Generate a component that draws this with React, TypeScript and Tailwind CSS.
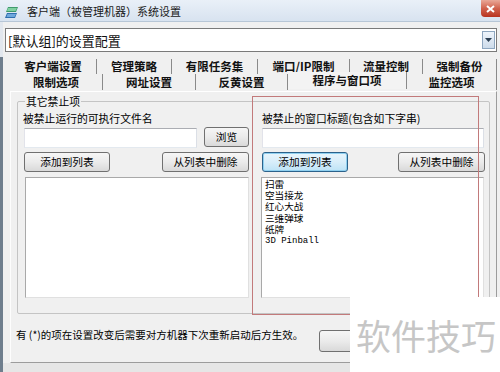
import React from "react";

const btn =
  "h-[20px] flex items-center justify-center rounded-[3px] border border-[#707070] bg-gradient-to-b from-[#f6f6f6] via-[#ebebeb] to-[#d9d9d9] text-[10.7px] leading-none text-black";
const btnFocus =
  "h-[20px] flex items-center justify-center rounded-[3px] border border-[#2c628b] bg-gradient-to-b from-[#e8f5fc] via-[#d8eefa] to-[#bde3f6] text-[10.7px] leading-none text-black shadow-[inset_0_0_0_1px_#8fd0f0]";

function Row1() {
  const tabs = [
    { t: "客户端设置", w: "w-[87px]" },
    { t: "管理策略", w: "w-[75px]" },
    { t: "有限任务集", w: "w-[86px]" },
    { t: "端口/IP限制", w: "w-[92px]" },
    { t: "流量控制", w: "w-[73px]" },
    { t: "强制备份", w: "w-[74px]" },
  ];
  return (
    <div className="mt-[7px] ml-[7px] flex h-[15px]">
      {tabs.map((x) => (
        <div
          key={x.t}
          className={`${x.w} h-[15px] flex items-center justify-center border-r border-[#8a8a8a] text-[11.5px] font-bold leading-none text-[#111]`}
        >
          {x.t}
        </div>
      ))}
    </div>
  );
}

function Row2() {
  const tabs = [
    { t: "限制选项", w: "w-[93px]", sel: false },
    { t: "网址设置", w: "w-[93px]", sel: false },
    { t: "反黄设置", w: "w-[92px]", sel: false },
    { t: "程序与窗口项", w: "w-[119px]", sel: true },
    { t: "监控选项", w: "w-[90px]", sel: false },
  ];
  return (
    <div className="ml-[7px] flex h-[16px]">
      {tabs.map((x) =>
        x.sel ? (
          <div
            key={x.t}
            className={`${x.w} h-[17px] -mt-[2px] flex items-center justify-center border-r border-[#8a8a8a] bg-[#f3f3f3] text-[11.5px] font-bold leading-none text-[#111]`}
          >
            {x.t}
          </div>
        ) : (
          <div
            key={x.t}
            className={`${x.w} h-[16px] flex items-center justify-center border-r border-[#8a8a8a] text-[11.5px] font-bold leading-none text-[#111] pt-[2px]`}
          >
            {x.t}
          </div>
        )
      )}
    </div>
  );
}

export default function App() {
  const items = ["扫雷", "空当接龙", "红心大战", "三维弹球", "纸牌"];
  return (
    <div className="relative w-[500px] h-[372px] overflow-hidden bg-[#f0f0f0] font-['Noto_Sans_CJK_SC','Noto_Sans',sans-serif] text-black">
      {/* title bar */}
      <div className="h-[22px] flex items-center bg-gradient-to-b from-[#e9f0f8] to-[#d8e3f0] border-b border-[#b7c6d6]">
        <svg className="ml-[5px] mt-[3px]" width="14" height="13" viewBox="0 0 14 13">
          <path d="M3 1 L13 1 L11 6 L1 6 Z" fill="#3f9a6c" />
          <path d="M3 2 L12 2 L10.5 5 L2 5 Z" fill="#7fd0a0" />
          <path d="M2 7 L12 7 L10 12 L0 12 Z" fill="#2f6fae" />
          <path d="M2.5 8 L11 8 L9.5 11 L1.5 11 Z" fill="#6fa8dc" />
        </svg>
        <span className="ml-[8px] mt-[2px] text-[11px] leading-none text-[#1a1a1a]">
          客户端（被管理机器）系统设置
        </span>
        <div className="ml-auto self-start w-[19px] h-[17px] rounded-bl-[4px] bg-gradient-to-b from-[#e9a898] via-[#d0614c] to-[#b8321e] flex items-center justify-center">
          <svg width="9" height="8" viewBox="0 0 9 8">
            <path d="M1 1 L8 7 M8 1 L1 7" stroke="#fff" strokeWidth="2" />
          </svg>
        </div>
      </div>

      <div className="flex h-[350px]">
        {/* left frame strip */}
        <div className="w-[3px] flex flex-col">
          <div className="h-[35px] bg-[#e2e7ee]" />
          <div className="flex-1 bg-[#6f7e8d]" />
        </div>

        <div className="flex-1 flex flex-col">
          {/* combobox */}
          <div className="mt-[6px] ml-[2px] w-[492px] h-[24px] border border-[#7a7a7a] bg-white flex items-center">
            <span className="ml-[2px] text-[13px] leading-none text-[#111]">[默认组]的设置配置</span>
            <div className="ml-auto mr-[1px] w-[13px] h-[18px] border border-[#8ea6bf] bg-gradient-to-b from-[#eef4fb] to-[#cddbea] flex items-center justify-center">
              <svg width="7" height="4" viewBox="0 0 7 4">
                <path d="M0 0 L7 0 L3.5 4 Z" fill="#2b3e52" />
              </svg>
            </div>
          </div>

          <Row1 />
          <Row2 />

          {/* tab panel */}
          <div className="mt-[1px] ml-[7px] w-[487px] h-[272px] border-t border-l border-t-[#ffffff] border-l-[#fdfdfd] border-r border-b border-r-[#9c9c9c] border-b-[#9c9c9c] bg-[#f0f0f0] flex flex-col">
            {/* group box */}
            <div className="relative mt-[9px] ml-[6px] w-[473px] h-[213px] border border-[#c4c4c4] rounded-[2px] pl-[6px]">
              <span className="absolute top-[-7px] left-[7px] bg-[#f0f0f0] px-[1px] text-[10.8px] leading-[12px]">
                其它禁止项
              </span>
              <div className="flex gap-[12px]">
                {/* left column */}
                <div className="w-[225px] flex flex-col">
                  <div className="mt-[10px] -ml-[1px] h-[12px] text-[10.8px] leading-[12px]">
                    被禁止运行的可执行文件名
                  </div>
                  <div className="mt-[4px] flex">
                    <div className="w-[173px] h-[20px] bg-white border border-[#abadb3] border-l-[#e2e3ea] border-r-[#dbdfe6] border-b-[#e3e9ef]" />
                    <div className={`${btn} ml-auto w-[45px] -mt-[1px]`}>浏览</div>
                  </div>
                  <div className="mt-[4px] flex">
                    <div className={`${btn} w-[86px]`}>添加到列表</div>
                    <div className={`${btn} ml-auto w-[87px]`}>从列表中删除</div>
                  </div>
                  <div className="mt-[5px] ml-[1px] w-[224px] h-[121px] bg-white border border-[#a9a9a9] border-r-[#e0e0e0] border-b-[#e0e0e0]" />
                </div>
                {/* right column */}
                <div className="w-[224px] flex flex-col">
                  <div className="mt-[10px] ml-[1px] h-[12px] text-[10.8px] leading-[12px]">
                    被禁止的窗口标题(包含如下字串)
                  </div>
                  <div className="mt-[4px] ml-[1px] w-[222px] h-[20px] bg-white border border-[#abadb3] border-l-[#e2e3ea] border-r-[#dbdfe6] border-b-[#e3e9ef]" />
                  <div className="mt-[4px] flex">
                    <div className={`${btnFocus} ml-[1px] w-[86px]`}>添加到列表</div>
                    <div className={`${btn} ml-auto w-[87px]`}>从列表中删除</div>
                  </div>
                  <div className="mt-[5px] w-[223px] h-[121px] bg-white border border-[#a9a9a9] border-r-[#e0e0e0] border-b-[#e0e0e0] pl-[3px] pt-[1px] flex flex-col">
                    {items.map((s) => (
                      <div key={s} className="h-[11.2px] text-[9.6px] leading-[11.2px] text-black">
                        {s}
                      </div>
                    ))}
                    <div className="h-[11.2px] mt-[1px] font-['Liberation_Mono',monospace] text-[9px] leading-[11.2px] text-black">
                      3D Pinball
                    </div>
                  </div>
                </div>
              </div>
            </div>

            {/* bottom note */}
            <div className="mt-[15px] pl-[5px] flex items-start">
              <div className="w-[303px] text-[10.5px] leading-[12px] text-black whitespace-nowrap">
                有 (*)的项在设置改变后需要对方机器下次重新启动后方生效。
              </div>
              <div className={`${btn} mt-[1px] w-[75px] h-[22px]`} />
            </div>
          </div>
          <div className="flex-1 bg-[#e6e6e6]" />
        </div>
      </div>

      {/* red annotation rectangle */}
      <div className="absolute left-[252px] top-[96px] w-[227px] h-[219px] border border-[#c27a7b] pointer-events-none" />

      {/* watermark */}
      <div className="absolute left-[350px] top-[297px] w-[150px] h-[75px] bg-white flex items-center pl-[6px]">
        <span className="text-[35px] leading-none text-[#c6c6c6] whitespace-nowrap">软件技巧</span>
      </div>
    </div>
  );
}
